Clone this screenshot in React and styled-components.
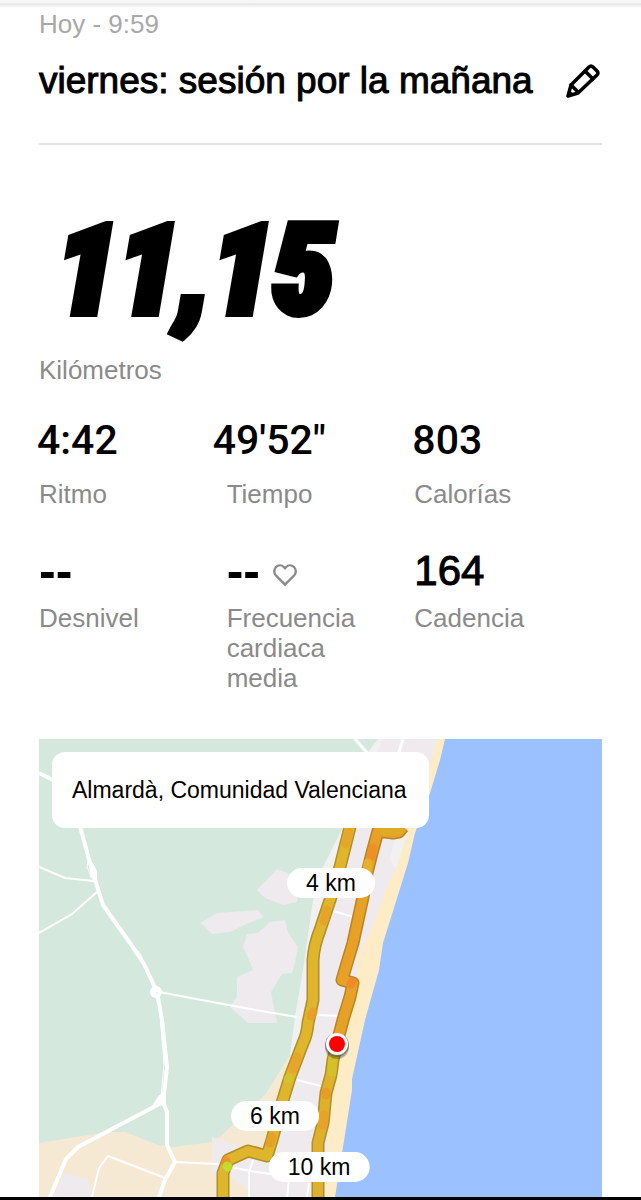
import React from 'react';
import styled, { createGlobalStyle } from 'styled-components';

const GlobalStyle = createGlobalStyle`
  * {
    box-sizing: border-box;
  }

  body {
    margin: 0;
    background: #fff;
    color: #000;
    font-family: "Liberation Sans", Arial, sans-serif;
  }
`;

const Page = styled.main`
  border-bottom: 3px solid #000;
`;

const TopEdge = styled.div`
  height: 8px;
  background: linear-gradient(#f6f6f6 0 3px, #e6e6e6 4px, #fff 8px);
`;

const Content = styled.div`
  padding: 1px 39px 0;
`;

const Header = styled.header`
  border-bottom: 2px solid #e4e4e4;
  padding-bottom: 38px;
`;

const DateText = styled.div`
  color: #a8a8a8;
  font-size: 26px;
  line-height: 30px;
`;

const TitleRow = styled.div`
  display: flex;
  align-items: center;
  justify-content: space-between;
  margin-top: 18px;
`;

const Title = styled.h1`
  margin: 0;
  font-size: 37px;
  font-weight: 400;
  line-height: 48px;
  white-space: nowrap;
  -webkit-text-stroke: 1px #000;
`;

const EditButton = styled.button`
  display: flex;
  border: 0;
  padding: 0;
  background: none;
  color: #000;
  cursor: pointer;
`;

const Distance = styled.div`
  margin-top: 66px;
  padding-left: 17px;
  font-family: "Roboto Condensed", Roboto, sans-serif;
  font-size: 124px;
  font-style: italic;
  font-weight: 900;
  line-height: 120px;
  -webkit-text-stroke: 8px #000;
`;

const Label = styled.div`
  color: #8a8a8a;
  font-size: 26px;
  line-height: 30px;
`;

const DistanceLabel = styled(Label)`
  margin-top: 24px;
`;

const Stats = styled.section`
  display: grid;
  grid-template-columns: repeat(3, 1fr);
  row-gap: 40px;
  margin: 33px 0 46px;
`;

const Stat = styled.div`
  display: grid;
  align-content: start;
  row-gap: ${props => (props.$tight ? '10px' : '17px')};
`;

const Value = styled.div`
  display: flex;
  align-items: center;
  gap: 12px;
  height: 44px;
  margin-left: ${props => (props.$wide ? '-14px' : '-2px')};
  font-family: Roboto, sans-serif;
  font-size: 41px;
  font-weight: 500;
  line-height: 44px;
  white-space: nowrap;
`;

const PlainValue = styled(Value)`
  margin-left: 0;
  font-family: "Liberation Sans", Arial, sans-serif;
  font-size: 42px;
  font-weight: 400;
  -webkit-text-stroke: 1px #000;
`;

const EmptyValue = styled(Value)`
  margin-left: 0;
  font-family: "Liberation Sans", Arial, sans-serif;
  font-size: 50px;
  font-weight: 700;

  svg {
    margin-top: 8px;
  }
`;

const NarrowLabel = styled(Label)`
  max-width: 150px;
`;

const MapBox = styled.section`
  position: relative;
  overflow: hidden;

  > svg {
    display: block;
    width: 100%;
    height: auto;
  }
`;

const Place = styled.div`
  position: absolute;
  top: 13px;
  left: 13px;
  border-radius: 13px;
  padding: 22px 22px 22px 20px;
  background: #fff;
  font-size: 23px;
  line-height: 32px;
  white-space: nowrap;
`;

const Pin = styled.div`
  position: absolute;
  left: ${props => props.$x / 5.63}%;
  top: ${props => props.$y / 4.58}%;
  transform: translate(-50%, -50%);
  border-radius: 15px;
  padding: 0 19px;
  background: #fff;
  font-size: 23px;
  line-height: 30px;
  white-space: nowrap;
`;

const pins = [
  { text: '4 km', x: 292, y: 144 },
  { text: '6 km', x: 236, y: 377 },
  { text: '10 km', x: 280, y: 428 }
];

const outbound = 'M312 84 L301 128 L291 161 L281 191 Q275 206 274 221 L274 261 L269 284 Q268 296 264 304 L251 338 L243 364 L233 401 L228 417 L209 412 L189 421 L184 434 L184 460';
const inbound = 'M364 88 L360 93 L354 94 L339 92 L333 114 L328 134 L324 158 L314 204 L308 224 L303 241 L314 244 L311 258 L304 281 L298 304';
const finish = 'M298 304 L294 321 L292 336 L287 354 L284 384 L279 404 L279 460';

// pace changes along the route
const paceMarks = [
  { d: 'M310 93 L307 105', color: '#e5a42a' },
  { d: 'M288 171 L285 182', color: '#e8a02a' },
  { d: 'M274 273 L272 277', color: '#e99b28' },
  { d: 'M258 318 L254 330', color: '#e8a32a' },
  { d: 'M250 339 L249 340', color: '#cfc62b' },
  { d: 'M233 398 L231 404', color: '#e99b28' },
  { d: 'M187 422 L187 423', color: '#f08a26' },
  { d: 'M188 427 L189 428', color: '#b9ea2c' },
  { d: 'M361 91 L345 92', color: '#dfae24' },
  { d: 'M334 109 L332 118', color: '#f08c25' },
  { d: 'M329 124 L328 130', color: '#e3b52b' },
  { d: 'M313 243 L312 245', color: '#f4822a' },
  { d: 'M294 318 L293 333', color: '#cfc62b' },
  { d: 'M287 353 L287 356', color: '#e99728' },
  { d: 'M285 376 L284 386', color: '#e9a028' }
];

const PencilIcon = () => (
  <svg width="37" height="36" viewBox="0 0 37 36" fill="none" stroke="currentColor"
    strokeWidth="3.5" strokeLinejoin="round" strokeLinecap="round" aria-hidden="true">
    <path d="M3 33 L6 22 L24 4 Q26 2 28 4 L32 8 Q34 10 32 12 L13 30 Z" />
    <path d="M20 8 L28 16 M6 22 L13 29" />
    <path d="M4 28 L8 32" strokeWidth="2" />
  </svg>
);

const HeartIcon = () => (
  <svg width="26" height="24" viewBox="0 0 26 24" fill="none" stroke="#8a8a8a"
    strokeWidth="2.4" strokeLinejoin="miter" aria-hidden="true">
    <path d="M13 21.6 L3.9 12.5 C1.6 10 1.7 6.2 4 4 C6.3 1.8 9.7 1.9 11.8 4 L13 5.2 L14.2 4 C16.3 1.9 19.7 1.8 22 4 C24.3 6.2 24.4 10 22.1 12.5 Z" />
  </svg>
);

const RouteMap = () => (
  <svg viewBox="0 0 563 458" fill="none" role="img" aria-label="Mapa del recorrido">
    <path fill="#d5e8dd" d="M0 0 H563 V458 H0 Z" />
    <path fill="#f5e9d3" d="M0 404 L68 393 L86 393 L119 406 L134 408 L173 403 L181 398 L226 356 L251 316 L300 316 V458 H0 Z" />
    <path fill="#f1f1f1" d="M339 0 L329 13 L304 88 L281 134 L274 161 L264 231 L256 278 L251 316 L310 316 L420 0 Z" />
    <g fill="#eeeaee">
      <path d="M343 0 L338 15 L314 88 L274 221 L276 260 L258 318 L244 368 L228 416 L204 408 L173 398 V434 L191 438 L209 451 L211 458 H300 L420 0 Z" />
      <path d="M218 151 L238 130 L249 134 L260 148 L258 163 L244 166 L226 159 Z" />
      <path d="M162 184 L178 174 L219 171 L224 178 L201 188 L191 193 L173 195 Z" />
      <path d="M208 195 L219 194 L231 183 L246 181 L249 193 L259 208 L255 228 L253 234 L243 235 L232 253 L238 284 H209 L191 268 L198 258 V238 L214 231 L210 221 L204 208 Z" />
      <path d="M26 433 L49 441 L53 458 H13 Z" />
    </g>
    <path fill="#f1f1f1" d="M356 100 L371 92 L358 133 L351 120 Z" />
    <path fill="#fdecc6" d="M398 0 L393 18 L368 94 L358 128 L348 148 L333 188 L318 221 L318 241 L308 288 L299 324 L289 381 V408 L286 458 H310 L420 0 Z" />
    <path fill="#9bc2ff" d="M406 0 L401 21 L391 54 L376 94 L369 124 L349 188 L344 204 L340 231 L326 281 L313 340 V351 L304 408 L296 458 H563 V0 Z" />

    <g stroke="#fff" strokeLinejoin="round">
      <path strokeWidth="4" d="M40 84 L53 131 L64 166 L91 204 L105 225 L118 253 L123 281 L128 328 L124 363 L128 373 V406 L136 423 L126 441 L120 458" />
      <path strokeWidth="4" d="M124 363 L39 408 L27 420 L11 458 M0 34 L16 42" />
      <path strokeWidth="3" d="M316 0 L330 16 M364 0 L359 16" />
      <path strokeWidth="2" d="M0 128 L26 139 L55 142 M0 194 L33 175 L58 153 M120 253 L211 270 L258 278 M278 276 L303 277" />
      <path strokeWidth="2" d="M258 341 L286 348 M294 172 L315 178 M53 458 L60 429 L69 417 L126 439 M136 423 L178 425 L211 432 L251 438" />
      <path strokeWidth="2" d="M214 421 L210 434 V458 M250 441 L248 458 M270 444 L268 458" />
      <path strokeWidth="1" d="M50 118 L48 128 L55 142 M88 199 L102 216 L107 228 M121 275 L125 325 L122 358 L112 368" />
    </g>
    <g fill="#fff">
      <path d="M50 124 L54 124 L58 132 V142 L51 138 Z" />
      <circle cx="117" cy="253" r="6" />
      <path d="M113 367 L120 356 L127 354 L127 366 Z" />
    </g>
    <circle cx="118" cy="254" r="1" fill="#e7ece8" />

    <g strokeLinejoin="round">
      <path stroke="#b08e28" strokeWidth="13" d={outbound} />
      <path stroke="#b98424" strokeWidth="13" d={inbound} />
      <path stroke="#b08e28" strokeWidth="13" d={finish} />
      <path stroke="#dfb52c" strokeWidth="10" d={outbound} />
      <path stroke="#e7a127" strokeWidth="10" d={inbound} />
      <path stroke="#dfb02c" strokeWidth="10" d={finish} />
      {paceMarks.map(mark => (
        <path key={mark.d} d={mark.d} stroke={mark.color} strokeWidth="9" strokeLinecap="round" opacity="0.8" />
      ))}
    </g>

    <circle cx="298" cy="308" r="12" fill="#000" opacity="0.25" />
    <circle cx="298" cy="306" r="12" fill="#555" opacity="0.5" />
    <circle cx="298" cy="305" r="11" fill="#fff" />
    <circle cx="298" cy="305" r="8" fill="#f00" />
  </svg>
);

const App = () => (
  <Page>
    <GlobalStyle />
    <TopEdge />
    <Content>
      <Header>
        <DateText>Hoy - 9:59</DateText>
        <TitleRow>
          <Title>viernes: sesión por la mañana</Title>
          <EditButton type="button" aria-label="Editar título"><PencilIcon /></EditButton>
        </TitleRow>
      </Header>

      <Distance>11,15</Distance>
      <DistanceLabel>Kilómetros</DistanceLabel>

      <Stats>
        <Stat>
          <Value>4:42</Value>
          <Label>Ritmo</Label>
        </Stat>
        <Stat>
          <Value $wide>49'52"</Value>
          <Label>Tiempo</Label>
        </Stat>
        <Stat>
          <Value>803</Value>
          <Label>Calorías</Label>
        </Stat>
        <Stat $tight>
          <EmptyValue>--</EmptyValue>
          <Label>Desnivel</Label>
        </Stat>
        <Stat $tight>
          <EmptyValue>-- <HeartIcon /></EmptyValue>
          <NarrowLabel>Frecuencia cardiaca media</NarrowLabel>
        </Stat>
        <Stat $tight>
          <PlainValue>164</PlainValue>
          <Label>Cadencia</Label>
        </Stat>
      </Stats>

      <MapBox>
        <RouteMap />
        {pins.map(pin => (
          <Pin key={pin.text} $x={pin.x} $y={pin.y}>{pin.text}</Pin>
        ))}
        <Place>Almardà, Comunidad Valenciana</Place>
      </MapBox>
    </Content>
  </Page>
);

export default App;
